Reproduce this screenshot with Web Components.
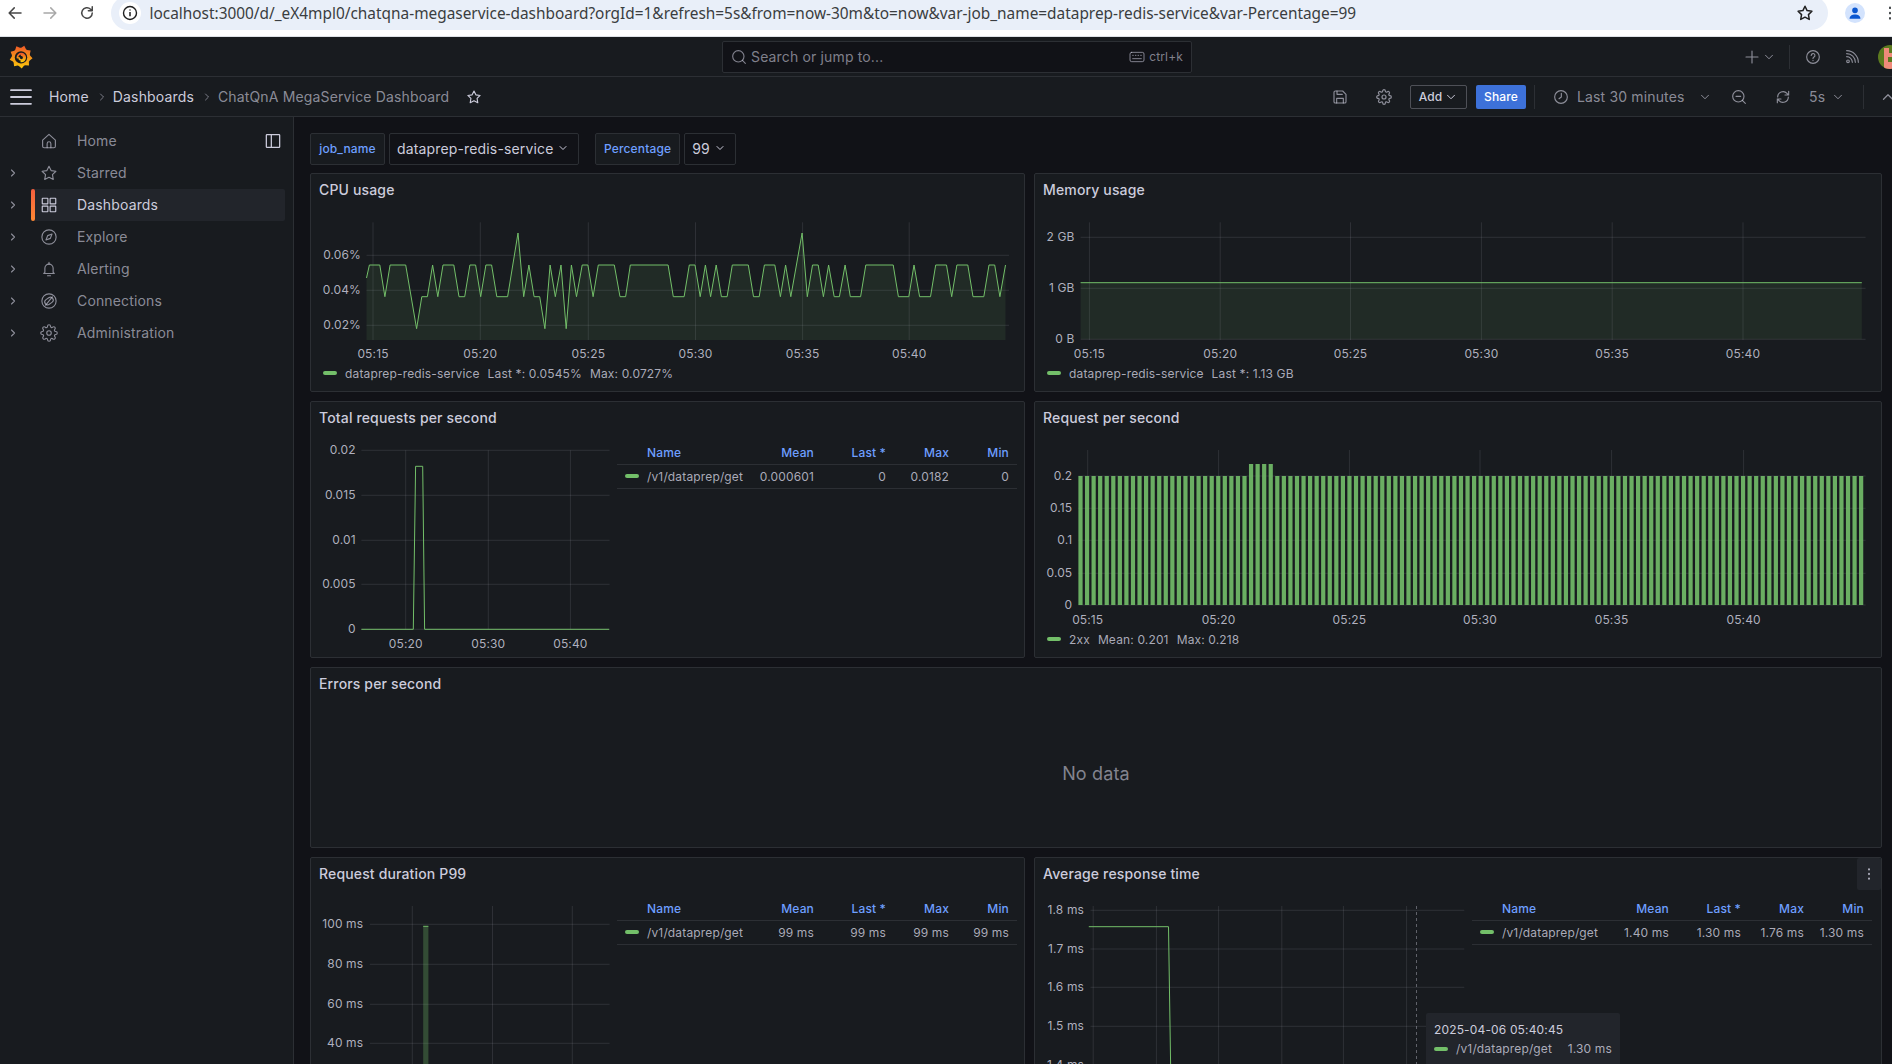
<!DOCTYPE html>
<html lang="en">
<head>
<meta charset="utf-8">
<title>ChatQnA MegaService Dashboard</title>
<style>
  html, body { margin: 0; height: 100%; overflow: hidden; background: #111217; }
  grafana-app { font-family: Inter, "Liberation Sans", sans-serif; }
</style>
</head>
<body>
<grafana-app>
  <browser-bar url="localhost:3000/d/_eX4mpl0/chatqna-megaservice-dashboard?orgId=1&amp;refresh=5s&amp;from=now-30m&amp;to=now&amp;var-job_name=dataprep-redis-service&amp;var-Percentage=99"></browser-bar>
  <top-bar></top-bar>
  <nav-bar></nav-bar>
  <side-menu slot="side">
    <nav-item label="Home" icon="home" nochevron dock></nav-item>
    <nav-item label="Starred" icon="star"></nav-item>
    <nav-item label="Dashboards" icon="apps" active></nav-item>
    <nav-item label="Explore" icon="compass"></nav-item>
    <nav-item label="Alerting" icon="bell"></nav-item>
    <nav-item label="Connections" icon="link"></nav-item>
    <nav-item label="Administration" icon="cog"></nav-item>
  </side-menu>
  <dash-view slot="main">
    <var-picker label="job_name" value="dataprep-redis-service" slot="vars"></var-picker>
    <var-picker label="Percentage" value="99" slot="vars" short></var-picker>

    <gf-panel heading="CPU usage">
      <time-chart name="cpu"></time-chart>
      <chart-legend><span>dataprep-redis-service</span><span>Last *: 0.0545%</span><span>Max: 0.0727%</span></chart-legend>
    </gf-panel>
    <gf-panel heading="Memory usage">
      <time-chart name="memory"></time-chart>
      <chart-legend><span>dataprep-redis-service</span><span>Last *: 1.13 GB</span></chart-legend>
    </gf-panel>

    <gf-panel heading="Total requests per second" row>
      <time-chart name="total"></time-chart>
      <legend-table series="/v1/dataprep/get" mean="0.000601" last="0" max="0.0182" min="0"></legend-table>
    </gf-panel>
    <gf-panel heading="Request per second">
      <time-chart name="rps"></time-chart>
      <chart-legend><span>2xx</span><span>Mean: 0.201</span><span>Max: 0.218</span></chart-legend>
    </gf-panel>

    <gf-panel heading="Errors per second" wide empty>No data</gf-panel>

    <gf-panel heading="Request duration P99" row>
      <time-chart name="p99"></time-chart>
      <legend-table series="/v1/dataprep/get" mean="99 ms" last="99 ms" max="99 ms" min="99 ms"></legend-table>
    </gf-panel>
    <gf-panel heading="Average response time" row menu>
      <time-chart name="avg"></time-chart>
      <legend-table series="/v1/dataprep/get" mean="1.40 ms" last="1.30 ms" max="1.76 ms" min="1.30 ms"></legend-table>
      <chart-tooltip slot="over" time="2025-04-06 05:40:45" series="/v1/dataprep/get" value="1.30 ms"></chart-tooltip>
    </gf-panel>
  </dash-view>
</grafana-app>

<script>
const ICONS = {
  home: '<path d="M3.5 10.8 12 3.2l8.5 7.6V19a2 2 0 0 1-2 2h-13a2 2 0 0 1-2-2z"/><path d="M9.5 21v-5.5a2.5 2.5 0 0 1 5 0V21"/>',
  star: '<path d="M12 3l2.8 5.8 6.4.9-4.6 4.5 1.1 6.4-5.7-3-5.7 3 1.1-6.4-4.6-4.5 6.4-.9z"/>',
  apps: '<rect x="3" y="3" width="7.5" height="7.5" rx=".6"/><rect x="13.5" y="3" width="7.5" height="7.5" rx=".6"/><rect x="3" y="13.5" width="7.5" height="7.5" rx=".6"/><rect x="13.5" y="13.5" width="7.5" height="7.5" rx=".6"/>',
  compass: '<circle cx="12" cy="12" r="9.5"/><path d="M16 8l-2.2 5.8L8 16l2.2-5.8z"/>',
  bell: '<path d="M6.5 16.5V11a5.5 5.5 0 0 1 11 0v5.5l1.5 1.5H5z"/><path d="M12 3.2v2M10 21h4"/>',
  link: '<circle cx="12" cy="12" r="9.5"/><rect x="6" y="8.2" width="12" height="7.6" rx="3.8" transform="rotate(-35 12 12)"/><path d="M7.5 17.5 16.5 6.5"/>',
  cog: '<circle cx="12" cy="12" r="3"/><path d="M19.4 15a1.65 1.65 0 0 0 .33 1.82l.06.06a2 2 0 0 1 0 2.83 2 2 0 0 1-2.83 0l-.06-.06a1.65 1.65 0 0 0-1.82-.33 1.65 1.65 0 0 0-1 1.51V21a2 2 0 0 1-2 2 2 2 0 0 1-2-2v-.09A1.65 1.65 0 0 0 9 19.4a1.65 1.65 0 0 0-1.82.33l-.06.06a2 2 0 0 1-2.83 0 2 2 0 0 1 0-2.83l.06-.06a1.65 1.65 0 0 0 .33-1.82 1.65 1.65 0 0 0-1.51-1H3a2 2 0 0 1-2-2 2 2 0 0 1 2-2h.09A1.65 1.65 0 0 0 4.6 9a1.65 1.65 0 0 0-.33-1.82l-.06-.06a2 2 0 0 1 0-2.83 2 2 0 0 1 2.83 0l.06.06a1.65 1.65 0 0 0 1.82.33H9a1.65 1.65 0 0 0 1-1.51V3a2 2 0 0 1 2-2 2 2 0 0 1 2 2v.09a1.65 1.65 0 0 0 1 1.51 1.65 1.65 0 0 0 1.82-.33l.06-.06a2 2 0 0 1 2.83 0 2 2 0 0 1 0 2.83l-.06.06a1.65 1.65 0 0 0-.33 1.82V9a1.65 1.65 0 0 0 1.51 1H21a2 2 0 0 1 2 2 2 2 0 0 1-2 2h-.09a1.65 1.65 0 0 0-1.51 1z"/>',
  right: '<path d="M9 6l6 6-6 6"/>',
  down: '<path d="M6 9l6 6 6-6"/>',
  up: '<path d="M6 15l6-6 6 6"/>',
  save: '<path d="M5 3h11l5 5v11a2 2 0 0 1-2 2H5a2 2 0 0 1-2-2V5a2 2 0 0 1 2-2z"/><path d="M7.5 3v5h8M7 21v-7h10v7"/>',
  clock: '<circle cx="12" cy="12" r="9.5"/><path d="M12.5 6.5V12L9 14.5"/>',
  zoomout: '<circle cx="11" cy="11" r="8.5"/><path d="M17 17l4.5 4.5M7.5 11h7"/>',
  sync: '<path d="M4 12a8 8 0 0 1 14-5.3L20.5 9M20.5 3.5V9H15"/><path d="M20 12a8 8 0 0 1-14 5.3L3.5 15M3.5 20.5V15H9"/>',
  help: '<circle cx="12" cy="12" r="9.5"/><path d="M9.3 9.6a2.8 2.8 0 1 1 3.9 2.6c-.8.4-1.2 1-1.2 1.9"/><path d="M12 16.8v.6"/>',
  rss: '<circle cx="6" cy="18.5" r="2"/><path d="M4 11.5a8.5 8.5 0 0 1 8.5 8.5M4 7a13 13 0 0 1 13 13M4 2.5A17.5 17.5 0 0 1 21.5 20"/>',
  plus: '<path d="M12 3v18M3 12h18"/>',
  search: '<circle cx="11" cy="11" r="8.5"/><path d="M17.2 17.2l4.3 4.3"/>',
  keyboard: '<rect x="1.5" y="5" width="21" height="14" rx="2.5"/><path d="M5.5 9.5h1M9.5 9.5h1M13.5 9.5h1M17.5 9.5h1M5.5 14.5h13"/>',
  dock: '<rect x="2" y="2.5" width="20" height="19" rx="1"/><path d="M9.5 2.5v19"/>',
  menu: '<path d="M2 5.2h20M2 12h20M2 18.8h20"/>',
  back: '<path d="M20 12H5M11 5.2 4.2 12l6.8 6.8"/>',
  forward: '<path d="M4 12h15M13 5.2l6.8 6.8-6.8 6.8"/>',
  reload: '<path d="M19 12a7 7 0 1 1-2.2-5.1L19 9M19 3.8V9h-5.2"/>',
  kebab: '<path d="M12 4.5v1M12 11.5v1M12 18.5v1"/>'
};

class GfIcon extends HTMLElement {
  connectedCallback() {
    const size = this.getAttribute('size') || 16;
    const w = this.getAttribute('weight') || 1.7;
    this.attachShadow({ mode: 'open' });
    this.shadowRoot.innerHTML = `
      <style>
        :host { display: inline-flex; flex: none; width: ${size}px; height: ${size}px; color: inherit; }
        svg { width: 100%; height: 100%; display: block; fill: none; stroke: currentColor; stroke-width: ${w}; stroke-linecap: round; stroke-linejoin: round; }
      </style>
      <svg viewBox="0 0 24 24">${ICONS[this.getAttribute('name')] || ''}</svg>`;
  }
}
customElements.define('gf-icon', GfIcon);

class GrafanaApp extends HTMLElement {
  connectedCallback() {
    this.attachShadow({ mode: 'open' });
    this.shadowRoot.innerHTML = `
      <style>
        :host { display: flex; flex-direction: column; height: 1064px; overflow: hidden; color: #ccccdc; font-size: 14px; letter-spacing: .01071em; }
        .under { flex: 1; min-height: 0; display: flex; background: #111217; }
      </style>
      <slot></slot>
      <div class="under"><slot name="side"></slot><slot name="main"></slot></div>`;
  }
}
customElements.define('grafana-app', GrafanaApp);

class BrowserBar extends HTMLElement {
  connectedCallback() {
    this.attachShadow({ mode: 'open' });
    this.shadowRoot.innerHTML = `
      <style>
        :host { display: flex; flex: none; align-items: center; height: 26px; padding-bottom: 10px; background: #fff; border-bottom: 1px solid #dde1e6; color: #3c4043; overflow: hidden; }
        gf-icon { color: #474747; }
        .back { margin-left: 6px; }
        .fwd { margin-left: 17px; color: #a8a8a8; }
        .reload { margin-left: 19px; }
        .omni { margin-left: 15px; height: 34px; width: 1717px; flex: none; background: #e9eff9; border-radius: 17px; display: flex; align-items: center; }
        .info { width: 22px; height: 22px; margin-left: 8px; border-radius: 50%; background: #fff; display: flex; align-items: center; justify-content: center; color: #1f1f1f; }
        .url { margin-left: 8.5px; font: 15.4px "Noto Sans", sans-serif; letter-spacing: 0; color: #3a3d40; white-space: nowrap; flex: 1; }
        .star { margin-right: 14px; color: #1f1f1f; }
        .avatar { margin-left: 17px; width: 20px; height: 20px; border-radius: 50%; background: #d3e3fd; display: flex; align-items: center; justify-content: center; flex: none; }
        .dots { margin-left: 16px; flex: none; color: #3c4043; }
      </style>
      <gf-icon class="back" name="back" size="18" weight="2"></gf-icon>
      <gf-icon class="fwd" name="forward" size="18" weight="2"></gf-icon>
      <gf-icon class="reload" name="reload" size="18" weight="2"></gf-icon>
      <div class="omni">
        <span class="info"><svg width="16" height="16" viewBox="0 0 16 16"><circle cx="8" cy="8" r="6.5" fill="none" stroke="currentColor" stroke-width="1.4"/><path d="M8 7v4.2M8 4.4v1.2" stroke="currentColor" stroke-width="1.5"/></svg></span>
        <span class="url">${this.getAttribute('url').replace(/&/g, '&amp;')}</span>
        <gf-icon class="star" name="star" size="18" weight="2"></gf-icon>
      </div>
      <span class="avatar"><svg width="14" height="14" viewBox="0 0 16 16" fill="#0b57d0"><circle cx="8" cy="5" r="3.2"/><path d="M1.8 14.5c0-3.2 2.8-4.8 6.2-4.8s6.2 1.6 6.2 4.8z"/></svg></span>
      <gf-icon class="dots" name="kebab" size="18" weight="2.6"></gf-icon>`;
  }
}
customElements.define('browser-bar', BrowserBar);

function gearPoints() {
  const pts = [];
  const teeth = 9;
  for (let i = 0; i < teeth; i++) {
    const a = (i / teeth) * Math.PI * 2 - 1.2;
    const step = Math.PI * 2 / teeth;
    [[9.2, -0.5], [11.6, -0.12], [9.2, 0.3]].forEach(([r, f]) => {
      pts.push((12 + r * Math.cos(a + f * step)).toFixed(2) + ',' + (12 + r * Math.sin(a + f * step)).toFixed(2));
    });
  }
  return pts.join(' ');
}

class TopBar extends HTMLElement {
  connectedCallback() {
    this.attachShadow({ mode: 'open' });
    this.shadowRoot.innerHTML = `
      <style>
        :host { display: grid; flex: none; grid-template-columns: 722px 470px 1fr; align-items: center; height: 39px; background: #181b1f; border-bottom: 1px solid #2c2f34; overflow: hidden; color: rgba(204,204,220,.65); }
        .logo { margin-left: 9px; width: 24px; height: 26px; display: block; }
        .search { height: 32px; box-sizing: border-box; background: #111217; border: 1px solid #2c2f34; border-radius: 2px; display: flex; align-items: center; padding: 0 8px; color: rgba(204,204,220,.6); }
        .search span { margin-left: 4px; flex: 1; }
        .search small { margin-left: 4px; font-size: 12px; flex: none; }
        .right { display: flex; align-items: center; height: 39px; }
        .sep { width: 1px; height: 24px; background: #2c2f34; margin-left: 13px; }
        .avatar { display: block; flex: none; width: 24px; height: 24px; margin-left: 18px; }
      </style>
      <svg class="logo" viewBox="0 0 24 24">
        <defs><linearGradient id="lg" x1="0" y1="0" x2="0" y2="1"><stop offset="0" stop-color="#f05a28"/><stop offset="1" stop-color="#fbca0a"/></linearGradient></defs>
        <polygon points="${gearPoints()}" fill="url(#lg)"/>
        <circle cx="12" cy="12.4" r="6.2" fill="#181b1f"/>
        <path d="M12.6 10.2a2.4 2.4 0 1 1-2.6 2.6M8.4 12.6a3.9 3.9 0 1 1 3.9 3.9" fill="none" stroke="url(#lg)" stroke-width="1.7" stroke-linecap="round"/>
      </svg>
      <div class="search">
        <gf-icon name="search" size="16"></gf-icon><span>Search or jump to...</span>
        <gf-icon name="keyboard" size="16" weight="1.5"></gf-icon><small>ctrl+k</small>
      </div>
      <div class="right">
        <gf-icon name="plus" size="16" style="margin-left:552px"></gf-icon>
        <gf-icon name="down" size="14" style="margin-left:2px"></gf-icon>
        <span class="sep"></span>
        <gf-icon name="help" size="16" style="margin-left:15px"></gf-icon>
        <gf-icon name="rss" size="16" style="margin-left:23px"></gf-icon>
        <svg class="avatar" viewBox="0 0 24 24"><defs><clipPath id="ac"><circle cx="12" cy="12" r="12"/></clipPath></defs><g clip-path="url(#ac)"><rect width="24" height="24" fill="#5c7a1f"/><path d="M6 3h5v5h4v-5h3v9h-8v5h5v-3h5v10H6z" fill="#f08a7a"/></g></svg>
      </div>`;
  }
}
customElements.define('top-bar', TopBar);

class NavBar extends HTMLElement {
  connectedCallback() {
    this.attachShadow({ mode: 'open' });
    this.shadowRoot.innerHTML = `
      <style>
        :host { display: grid; flex: none; grid-template-columns: 1fr 562px; align-items: center; height: 39px; background: #181b1f; border-bottom: 1px solid #2c2f34; overflow: hidden; color: rgba(204,204,220,.65); }
        .left, .right { display: flex; align-items: center; min-width: 0; }
        .crumb { color: #ccccdc; white-space: nowrap; }
        .cur { color: rgba(204,204,220,.65); white-space: nowrap; }
        .btn { flex: none; height: 24px; box-sizing: border-box; display: flex; align-items: center; justify-content: center; border-radius: 2px; font-size: 12px; font-weight: 500; }
        .add { width: 57px; border: 1px solid rgba(204,204,220,.3); color: #ccccdc; }
        .share { width: 50px; background: #3d71d9; color: #fff; }
        .sep { flex: none; width: 1px; height: 24px; background: #2c2f34; }
        .t { white-space: nowrap; flex: none; }
      </style>
      <div class="left">
        <gf-icon name="menu" size="24" weight="1.8" style="margin-left:9px;color:#ccccdc"></gf-icon>
        <span class="crumb" style="margin-left:16px">Home</span>
        <gf-icon name="right" size="12" style="margin-left:7px"></gf-icon>
        <span class="crumb" style="margin-left:5px">Dashboards</span>
        <gf-icon name="right" size="12" style="margin-left:7px"></gf-icon>
        <span class="cur" style="margin-left:5px">ChatQnA MegaService Dashboard</span>
        <gf-icon name="star" size="16" style="margin-left:17px;color:#ccccdc"></gf-icon>
      </div>
      <div class="right">
        <gf-icon name="save" size="16" style="margin-left:2px"></gf-icon>
        <gf-icon name="cog" size="16" weight="1.8" style="margin-left:28px"></gf-icon>
        <span class="btn add" style="margin-left:18px">Add<gf-icon name="down" size="14" style="margin-left:2px"></gf-icon></span>
        <span class="btn share" style="margin-left:9px">Share</span>
        <span class="sep" style="margin-left:8px"></span>
        <gf-icon name="clock" size="16" style="margin-left:18px"></gf-icon>
        <span class="t" style="margin-left:8px;width:109px">Last 30 minutes</span>
        <gf-icon name="down" size="14" style="margin-left:12px"></gf-icon>
        <gf-icon name="zoomout" size="16" style="margin-left:19px"></gf-icon>
        <gf-icon name="sync" size="16" style="margin-left:28px"></gf-icon>
        <span class="t" style="margin-left:18px;width:15px">5s</span>
        <gf-icon name="down" size="14" style="margin-left:7px"></gf-icon>
        <span class="sep" style="margin-left:18px"></span>
        <gf-icon name="up" size="18" style="margin-left:15px"></gf-icon>
      </div>`;
  }
}
customElements.define('nav-bar', NavBar);

class SideMenu extends HTMLElement {
  connectedCallback() {
    this.attachShadow({ mode: 'open' });
    this.shadowRoot.innerHTML = `
      <style>
        :host { display: block; flex: none; width: 293px; padding-top: 8px; box-sizing: content-box; background: #181b1f; border-right: 1px solid #2c2f34; }
      </style>
      <slot></slot>`;
  }
}
customElements.define('side-menu', SideMenu);

class NavItem extends HTMLElement {
  connectedCallback() {
    this.attachShadow({ mode: 'open' });
    const chev = this.hasAttribute('nochevron') ? '' : '<gf-icon name="right" size="12" weight="2.2"></gf-icon>';
    const dock = this.hasAttribute('dock') ? '<gf-icon class="dock" name="dock" size="16" weight="1.9"></gf-icon>' : '';
    this.shadowRoot.innerHTML = `
      <style>
        :host { display: flex; height: 32px; align-items: center; color: rgba(204,204,220,.65); }
        .chev { width: 26px; display: flex; justify-content: center; flex: none; }
        .row { flex: none; width: 253.5px; height: 32px; margin-left: 5px; display: flex; align-items: center; border-radius: 2px; }
        .ico { margin-left: 9px; }
        .label { margin-left: 19px; flex: 1; padding-bottom: 2px; }
        .dock { margin-right: 4px; color: #ccccdc; }
        :host([active]) .row { background: #22252b; color: #ccccdc; position: relative; }
        :host([active]) .row::before { content: ''; position: absolute; left: 0; top: 0; bottom: 0; width: 4px; border-radius: 2px; background: linear-gradient(180deg, #f55f3e, #ff8833); }
      </style>
      <span class="chev">${chev}</span>
      <div class="row"><gf-icon class="ico" name="${this.getAttribute('icon')}" size="18" weight="1.5"></gf-icon><span class="label">${this.getAttribute('label')}</span>${dock}</div>`;
  }
}
customElements.define('nav-item', NavItem);

class DashView extends HTMLElement {
  connectedCallback() {
    this.attachShadow({ mode: 'open' });
    this.shadowRoot.innerHTML = `
      <style>
        :host { display: block; flex: 1; min-width: 0; padding: 16px 0 0 16px; background: #111217; overflow: hidden; }
        .vars { display: flex; height: 32px; margin-bottom: 8px; }
        .grid { display: grid; grid-template-columns: 715px 848px; grid-template-rows: 219px 257px 181px 260px; gap: 9px; }
      </style>
      <div class="vars"><slot name="vars"></slot></div>
      <div class="grid"><slot></slot></div>`;
  }
}
customElements.define('dash-view', DashView);

class VarPicker extends HTMLElement {
  connectedCallback() {
    this.attachShadow({ mode: 'open' });
    const short = this.hasAttribute('short');
    this.shadowRoot.innerHTML = `
      <style>
        :host { display: flex; margin-right: 16px; }
        .lab, .val { height: 32px; box-sizing: border-box; display: flex; align-items: center; border: 1px solid #2c2f34; border-radius: 2px; padding-bottom: 2px; }
        .lab { background: #181b1f; color: #6e9fff; font-size: 12px; font-weight: 500; padding-left: 8px; padding-right: 8px; min-width: ${short ? 85 : 75}px; justify-content: center; }
        .val { margin-left: 4px; background: #111217; color: #ccccdc; padding-left: 7px; padding-right: 9px; width: ${short ? 52 : 190}px; justify-content: space-between; }
      </style>
      <span class="lab">${this.getAttribute('label')}</span>
      <span class="val">${this.getAttribute('value')}<gf-icon name="down" size="12" weight="2"></gf-icon></span>`;
  }
}
customElements.define('var-picker', VarPicker);

class GfPanel extends HTMLElement {
  connectedCallback() {
    this.attachShadow({ mode: 'open' });
    const menu = this.hasAttribute('menu') ? '<span class="menu"><gf-icon name="kebab" size="16" weight="2.4"></gf-icon></span>' : '';
    this.shadowRoot.innerHTML = `
      <style>
        :host { display: flex; flex-direction: column; position: relative; min-width: 0; background: #181b1f; border: 1px solid #2c2f34; border-radius: 2px; box-sizing: border-box; overflow: hidden; }
        :host([wide]) { grid-column: 1 / span 2; }
        h2 { margin: 0 0 2px; flex: none; height: 30px; padding: 0 8px; display: flex; align-items: center; font-size: 14px; font-weight: 500; letter-spacing: inherit; color: #ccccdc; }
        .body { flex: 1; min-height: 0; display: flex; flex-direction: column; }
        :host([row]) .body { flex-direction: row; align-items: flex-start; }
        :host([empty]) .body { align-items: center; justify-content: center; font-size: 18px; color: rgba(204,204,220,.6); }
        .menu { position: absolute; top: 0; right: 0; width: 24px; height: 32px; background: #22252b; border-radius: 2px; display: flex; align-items: center; justify-content: center; }
      </style>
      <h2>${this.getAttribute('heading')}</h2>
      ${menu}
      <div class="body"><slot></slot></div>
      <slot name="over"></slot>`;
  }
}
customElements.define('gf-panel', GfPanel);

class ChartLegend extends HTMLElement {
  connectedCallback() {
    this.attachShadow({ mode: 'open' });
    this.shadowRoot.innerHTML = `
      <style>
        :host { display: flex; align-items: center; height: 24px; padding-left: 12px; font-size: 12px; color: rgba(204,204,220,.82); white-space: nowrap; }
        i { flex: none; width: 14px; height: 4px; border-radius: 2px; background: #73bf69; margin-right: 8px; }
        ::slotted(span) { margin-right: 8px; }
      </style>
      <i></i><slot></slot>`;
  }
}
customElements.define('chart-legend', ChartLegend);

class LegendTable extends HTMLElement {
  connectedCallback() {
    this.attachShadow({ mode: 'open' });
    const a = n => this.getAttribute(n);
    this.shadowRoot.innerHTML = `
      <style>
        :host { display: block; flex: none; width: 400px; margin: 7px 0 0 5px; font-size: 12px; color: rgba(204,204,220,.82); white-space: nowrap; }
        .tr { display: grid; grid-template-columns: 137px 68px 72px 63px 60px; height: 24px; box-sizing: border-box; align-items: center; border-bottom: 1px solid #2c2f34; }
        .th { color: #6e9fff; font-weight: 500; }
        .tr > span { text-align: right; padding-right: 8px; }
        .tr > span:first-child { text-align: left; padding: 0 0 0 30px; position: relative; }
        i { position: absolute; left: 8px; top: 5px; width: 14px; height: 4px; border-radius: 2px; background: #73bf69; }
      </style>
      <div class="tr th"><span>Name</span><span>Mean</span><span>Last *</span><span>Max</span><span>Min</span></div>
      <div class="tr"><span><i></i>${a('series')}</span><span>${a('mean')}</span><span>${a('last')}</span><span>${a('max')}</span><span>${a('min')}</span></div>`;
  }
}
customElements.define('legend-table', LegendTable);

class ChartTooltip extends HTMLElement {
  connectedCallback() {
    this.attachShadow({ mode: 'open' });
    const a = n => this.getAttribute(n);
    this.shadowRoot.innerHTML = `
      <style>
        :host { position: absolute; left: 391px; top: 155px; width: 194px; height: 70px; box-sizing: border-box; padding: 8px; background: #22252b; border-radius: 2px; font-size: 12px; color: #ccccdc; white-space: nowrap; }
        .d { line-height: 18px; }
        .r { display: flex; align-items: center; line-height: 18px; margin-top: 1px; color: rgba(204,204,220,.82); }
        i { width: 14px; height: 4px; border-radius: 2px; background: #73bf69; margin-right: 8px; }
        .v { margin-left: auto; }
      </style>
      <div class="d">${a('time')}</div>
      <div class="r"><i></i><span>${a('series')}</span><span class="v">${a('value')}</span></div>`;
  }
}
customElements.define('chart-tooltip', ChartTooltip);

// CPU trace, read off the reference: [x in crop units, level]
const CPU_LV = { H: 265, M: 296.7, L: 328.7, T: 233 };
const CPU_TRACE = '147H 169H 180M 191H 224H 247L 258M 270M 281H 292M 303H 326H 337M 349M 360H 372H 383M 394H 406H 417M 440M 462T 474M 485H 496M 508M 519L 530H 541M 553H 564L 575H 586M 598H 610H 621M 632H 666H 678M 690M 700H 780H 791M 814M 825H 837H 848M 859H 870M 882H 893M 905M 916H 950H 961M 973M 984H 1006H 1018M 1029H 1040M 1064T 1075M 1086H 1098H 1109M 1120H 1132M 1143M 1155H 1166M 1188M 1199H 1257H 1268M 1290M 1301H 1313M 1336M 1347H 1370H 1381M 1392H 1415H 1426M 1449M 1460H 1472H 1483M 1495H';
const cpuPts = [[366.5, 278]].concat(CPU_TRACE.split(' ').map(s => [300 + parseInt(s) / 2.119, CPU_LV[s.slice(-1)]]));

const rpsBars = [];
for (let i = 0; i < 120; i++) rpsBars.push([1078.4 + i * 6.56, i >= 26 && i <= 29 ? 464 : 476]);

const CHARTS = {
  cpu: {
    box: [311, 206, 713, 155], xLabelY: 354, yRight: 361, hL: 366.5, hR: 1009, vTop: 222.3, vBot: 340,
    h: [[255.3, '0.06%'], [290.3, '0.04%'], [325.3, '0.02%']],
    v: [[373, '05:15'], [480.3, '05:20'], [588.3, '05:25'], [695.5, '05:30'], [802.6, '05:35'], [909.2, '05:40']],
    line: cpuPts, base: 340
  },
  memory: {
    box: [1035, 206, 846, 155], xLabelY: 354, yRight: 1074.5, hL: 1080.6, hR: 1865.6, vTop: 222.3, vBot: 340,
    h: [[237.3, '2 GB'], [288.3, '1 GB'], [339.3, '0 B']],
    v: [[1089.4, '05:15'], [1220.2, '05:20'], [1350.5, '05:25'], [1481.4, '05:30'], [1612.2, '05:35'], [1743, '05:40']],
    line: [[1080.6, 282.7], [1861.8, 282.7]], base: 339.3
  },
  total: {
    box: [311, 434, 301, 222], xLabelY: 644, yRight: 355.7, hL: 361.4, hR: 609.6, vTop: 450.3, vBot: 629.3,
    h: [[450.3, '0.02'], [495.3, '0.015'], [540.3, '0.01'], [584.3, '0.005'], [629.3, '0']],
    v: [[405.7, '05:20'], [488.3, '05:30'], [570.4, '05:40']],
    line: [[361.4, 629.3], [413.3, 629.3], [415.6, 466.3], [422.7, 466.3], [424.6, 629.3], [609.2, 629.3]]
  },
  rps: {
    box: [1035, 434, 846, 193], xLabelY: 620, yRight: 1072.3, hL: 1078.4, hR: 1865.6, vTop: 450, vBot: 605,
    h: [[476, '0.2'], [508.3, '0.15'], [540.3, '0.1'], [573.3, '0.05'], [605, '0']],
    v: [[1087.7, '05:15'], [1218.6, '05:20'], [1349.4, '05:25'], [1480, '05:30'], [1611.6, '05:35'], [1743.6, '05:40']],
    bars: rpsBars, barW: 4.2, base: 605
  },
  p99: {
    box: [311, 890, 301, 175], yRight: 363.2, hL: 369.8, hR: 609.6, vTop: 906, vBot: 1064,
    h: [[924.3, '100 ms'], [964.3, '80 ms'], [1004.3, '60 ms'], [1043.3, '40 ms']],
    v: [[412.3, ''], [492.5, ''], [572.3, '']],
    spike: [423.2, 926.3, 5.2, 140]
  },
  avg: {
    box: [1035, 890, 432, 175], yRight: 1084, hL: 1090.5, hR: 1464.3, vTop: 906, vBot: 1064,
    h: [[910.3, '1.8 ms'], [949, '1.7 ms'], [987.3, '1.6 ms'], [1026.3, '1.5 ms'], [1065, '1.4 ms']],
    v: [[1093.2, ''], [1156.4, ''], [1218.6, ''], [1281.8, ''], [1343.4, ''], [1406.6, '']],
    line: [[1088.8, 926.7], [1168.5, 926.7], [1170.7, 1070]], crosshair: 1416.5
  }
};

class TimeChart extends HTMLElement {
  connectedCallback() {
    const c = CHARTS[this.getAttribute('name')];
    const [x, y, w, h] = c.box;
    const GRID = 'rgba(204,204,220,.12)';
    let g = '';
    c.h.forEach(([py, label]) => {
      g += `<line x1="${c.hL}" x2="${c.hR}" y1="${py}" y2="${py}" stroke="${GRID}"/>`;
      g += `<text x="${c.yRight}" y="${py + 4}" text-anchor="end">${label}</text>`;
    });
    c.v.forEach(([px, label]) => {
      g += `<line x1="${px}" x2="${px}" y1="${c.vTop}" y2="${c.vBot}" stroke="${GRID}"/>`;
      if (label) g += `<text x="${px}" y="${c.xLabelY + 4}" text-anchor="middle">${label}</text>`;
    });
    if (c.line) {
      const d = c.line.map(p => p[0].toFixed(1) + ' ' + p[1]).join(' L');
      if (c.base) {
        const first = c.line[0][0], last = c.line[c.line.length - 1][0];
        g += `<path d="M${first} ${c.base} L${d} L${last} ${c.base}Z" fill="#73bf69" fill-opacity=".1"/>`;
      }
      g += `<path d="M${d}" fill="none" stroke="#73bf69" stroke-width="1" stroke-linejoin="round"/>`;
    }
    if (c.bars) {
      c.bars.forEach(([bx, by]) => {
        g += `<rect x="${bx.toFixed(2)}" y="${by}" width="${c.barW}" height="${c.base - by}" fill="#73bf69" fill-opacity=".9"/>`;
      });
    }
    if (c.spike) {
      const [sx, sy, sw, sh] = c.spike;
      g += `<rect x="${sx}" y="${sy}" width="${sw}" height="${sh}" fill="#73bf69" fill-opacity=".3"/>`;
      g += `<line x1="${sx}" x2="${sx + sw}" y1="${sy}" y2="${sy}" stroke="#73bf69"/>`;
    }
    if (c.crosshair) {
      g += `<line x1="${c.crosshair}" x2="${c.crosshair}" y1="${c.vTop}" y2="${c.vBot}" stroke="rgba(204,204,220,.4)" stroke-dasharray="3 3"/>`;
    }
    this.attachShadow({ mode: 'open' });
    this.shadowRoot.innerHTML = `
      <style>
        :host { display: block; flex: none; width: ${w}px; height: ${h}px; }
        svg { display: block; width: 100%; height: 100%; }
        text { font: 12px Inter, "Liberation Sans", sans-serif; letter-spacing: .01071em; fill: rgba(204,204,220,.85); }
      </style>
      <svg viewBox="${x} ${y} ${w} ${h}">${g}</svg>`;
  }
}
customElements.define('time-chart', TimeChart);
</script>
</body>
</html>
